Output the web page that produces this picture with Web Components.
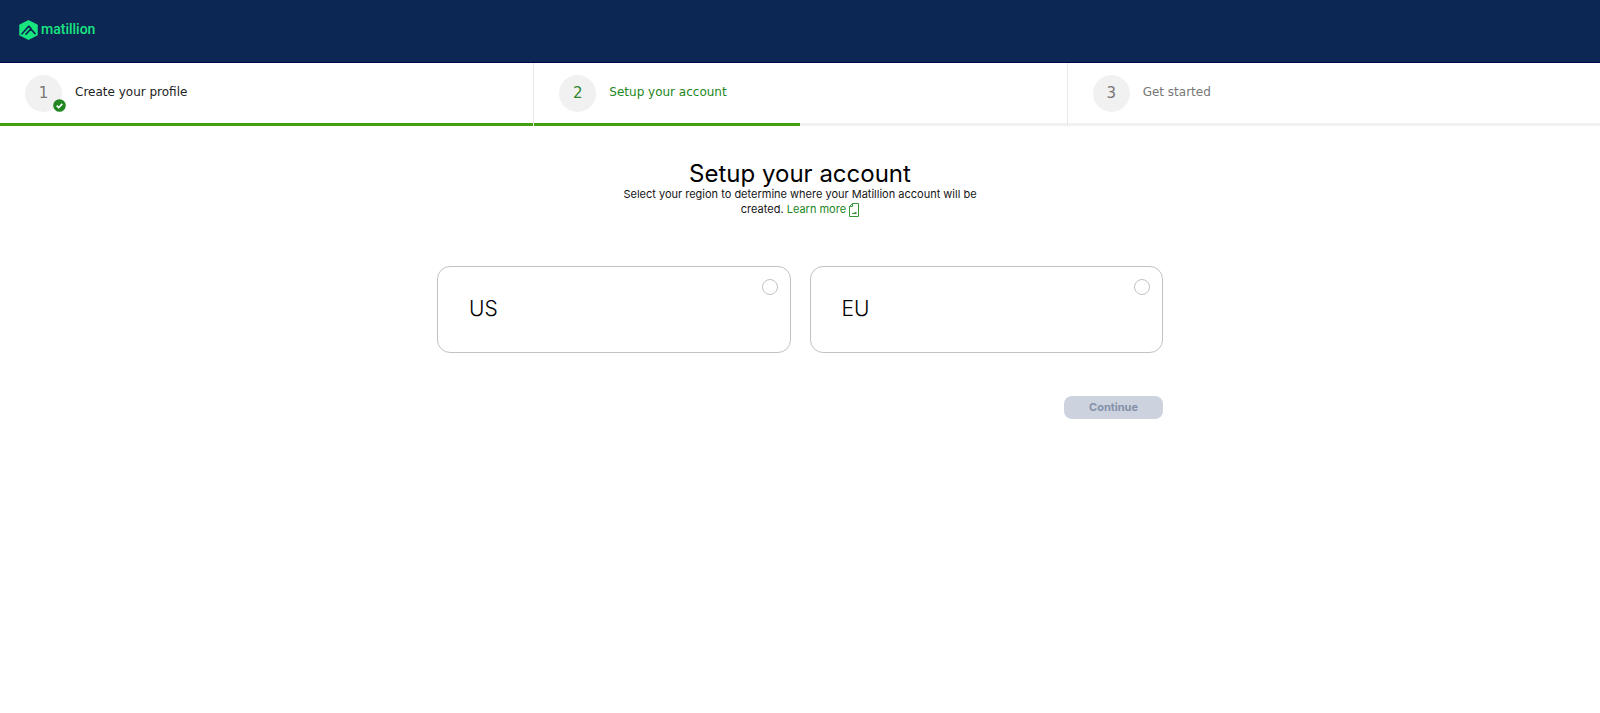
<!DOCTYPE html>
<html lang="en">
<head>
<meta charset="utf-8">
<title>Setup your account</title>
<style>
  body { margin: 0; background: #fff; color: #151515; font-family: Inter, "Liberation Sans", sans-serif; }
</style>
</head>
<body>
<account-setup-page></account-setup-page>

<template id="page-template">
  <style>
    :host { display: block; }
    nav ol { display: grid; grid-template-columns: repeat(3, 1fr); list-style: none; margin: 0; padding: 0; }
    main { box-sizing: border-box; width: 100%; max-width: 726px; margin: 0 auto; padding-top: 35px; }
    .intro { max-width: 380px; margin: 0 auto; text-align: center; }
    h1 { margin: 0; font-size: 24px; line-height: 26px; font-weight: 400; color: #000; }
    p { margin: 0; font-size: 11px; line-height: 15px; }
    a { color: #228722; text-decoration: none; }
    a svg { vertical-align: -4px; }
    fieldset { display: grid; grid-template-columns: 1fr 1fr; gap: 19px; border: 0; margin: 49px 0 0; padding: 0; min-width: 0; }
    .actions { display: flex; justify-content: flex-end; margin-top: 43px; }
    button { width: 99px; height: 23px; padding: 0 0 1px; border: 0; border-radius: 8px; background: #ccd3de; color: #8491a9; font: 700 11px/15px Inter, "Liberation Sans", sans-serif; }
  </style>
  <brand-header></brand-header>
  <nav aria-label="Progress">
    <ol>
      <li><progress-step number="1" state="done" progress="100">Create your profile</progress-step></li>
      <li><progress-step number="2" state="active" progress="50">Setup your account</progress-step></li>
      <li><progress-step number="3" state="todo" progress="0">Get started</progress-step></li>
    </ol>
  </nav>
  <main>
    <div class="intro">
      <h1>Setup your account</h1>
      <p>Select your region to determine where your Matillion account will be created. <a href="#learn-more">Learn more <svg width="10" height="14" viewBox="0 0 10 14" fill="none" stroke="#3a943a" aria-hidden="true"><path d="M3.5.5h6v13h-9v-10zM3.5.5v3h-3M3 10.5h4.500M5.500 9.500h2"/></svg></a></p>
    </div>
    <fieldset aria-label="Region">
      <region-card value="us">US</region-card>
      <region-card value="eu">EU</region-card>
    </fieldset>
    <div class="actions"><button type="button" disabled>Continue</button></div>
  </main>
</template>

<template id="header-template">
  <style>
    :host { display: block; background: #0c2754; border-bottom: 1px solid #02034a; }
    header { height: 62px; display: flex; align-items: center; padding: 0 19px 2px; box-sizing: border-box; }
    a { display: flex; align-items: center; gap: 3px; color: #19e57f; text-decoration: none; font: 500 14px/18px Roboto, "Liberation Sans", sans-serif; }
    span { padding-bottom: 2px; }
    svg { display: block; }
  </style>
  <header>
    <a href="#home">
      <svg width="19" height="20" viewBox="0 0 19 20" aria-hidden="true">
        <path d="M9.500.8 18 5.100v9.800L9.500 19.200 1 14.900V5.100z" fill="#19e57f" stroke="#19e57f" stroke-width="1.500" stroke-linejoin="round"/>
        <path d="M3 13.800 9.700 6.200 12 8.600M7 14.200 11.800 9 16 13.600" fill="none" stroke="#0c2754" stroke-width="1.700" stroke-linecap="round" stroke-linejoin="round"/>
      </svg>
      <span>matillion</span>
    </a>
  </header>
</template>

<template id="step-template">
  <style>
    :host { display: block; color: #777; --digit: #777; --rule: 1px solid #e8e8e8; }
    :host([number="1"]) { --rule: 0; }
    :host([state="done"]) { color: #222; }
    :host([state="active"]) { color: #228722; --digit: #2d852d; }
    .step { display: flex; align-items: center; gap: 13px; height: 60px; padding: 0 25px; box-sizing: border-box; border-left: var(--rule); }
    .circle { position: relative; width: 37px; height: 37px; border-radius: 50%; background: #f1f1f1; color: var(--digit); display: grid; place-items: center; font: 15px/18px "DejaVu Sans", sans-serif; }
    .label { font: 12px/16px "DejaVu Sans", sans-serif; padding-bottom: 2px; }
    .badge { position: absolute; right: -4px; bottom: 0; display: none; }
    :host([state="done"]) .badge { display: block; }
    .track { height: 3px; background: #f1f1f1; border-left: var(--rule); }
    .fill { height: 3px; background: #42a010; }
  </style>
  <div class="step">
    <div class="circle"><span class="number"></span>
      <svg class="badge" width="13" height="13" viewBox="0 0 13 13" aria-hidden="true"><circle cx="6.500" cy="6.500" r="6.300" fill="#228722"/><path d="M3.700 6.600 5.700 8.500 9.300 4.800" fill="none" stroke="#fff" stroke-width="1.700"/></svg>
    </div>
    <span class="label"><slot></slot></span>
  </div>
  <div class="track"><div class="fill"></div></div>
</template>

<template id="card-template">
  <style>
    :host { display: block; }
    label { display: flex; justify-content: space-between; align-items: flex-start; box-sizing: border-box; height: 87px; padding: 12px 12px 12px 31px; border: 1px solid #c2c2c2; border-radius: 13px; }
    .name { align-self: center; font-size: 21px; line-height: 26px; font-weight: 300; color: #000; padding-bottom: 2px; }
    input { appearance: none; width: 16px; height: 16px; margin: 0; border: 1px solid #c2c2c2; border-radius: 50%; background: #fff; }
    input:checked { border: 5px solid #228722; }
  </style>
  <label><span class="name"><slot></slot></span><input type="radio" name="region"></label>
</template>

<script>
  class TemplateElement extends HTMLElement {
    constructor() {
      super();
      this.attachShadow({ mode: "open" })
        .append(document.getElementById(this.constructor.template).content.cloneNode(true));
    }
  }
  class BrandHeader extends TemplateElement { static template = "header-template"; }
  class ProgressStep extends TemplateElement {
    static template = "step-template";
    connectedCallback() {
      this.shadowRoot.querySelector(".number").textContent = this.getAttribute("number");
      this.shadowRoot.querySelector(".fill").style.width = this.getAttribute("progress") + "%";
    }
  }
  class RegionCard extends TemplateElement {
    static template = "card-template";
    connectedCallback() {
      const input = this.shadowRoot.querySelector("input");
      input.value = this.getAttribute("value");
      input.addEventListener("change", () => {
        for (const card of this.parentNode.querySelectorAll("region-card")) {
          if (card !== this) card.shadowRoot.querySelector("input").checked = false;
        }
        this.dispatchEvent(new CustomEvent("region-change", { bubbles: true }));
      });
    }
  }
  class AccountSetupPage extends TemplateElement {
    static template = "page-template";
    connectedCallback() {
      this.shadowRoot.addEventListener("region-change", () => {
        this.shadowRoot.querySelector("button").disabled = false;
      });
    }
  }
  customElements.define("brand-header", BrandHeader);
  customElements.define("progress-step", ProgressStep);
  customElements.define("region-card", RegionCard);
  customElements.define("account-setup-page", AccountSetupPage);
</script>
</body>
</html>
